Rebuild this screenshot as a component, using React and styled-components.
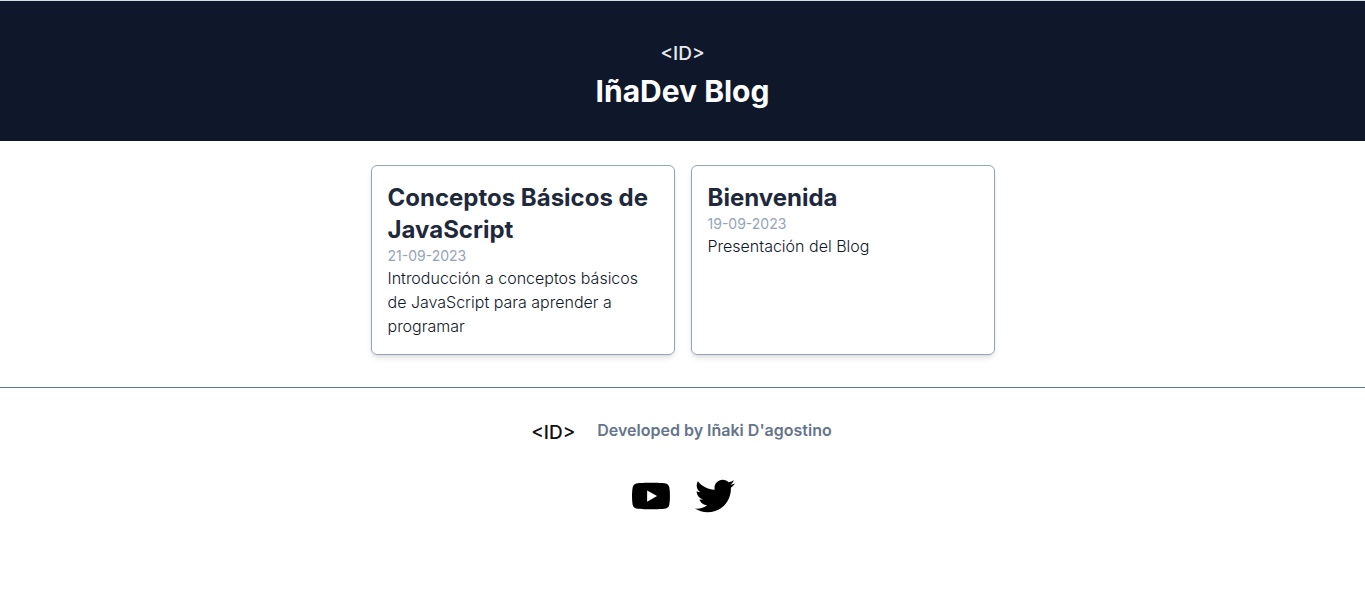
import React from "react";
import styled, { createGlobalStyle } from "styled-components";
import { FaTwitter, FaYoutube } from "react-icons/fa";

const GlobalStyle = createGlobalStyle`
  *, *::before, *::after { box-sizing: border-box; }
  body {
    margin: 0;
    background: #fff;
    color: #1e293b;
    font-family: Inter, "Liberation Sans", sans-serif;
    font-size: 16px;
    line-height: 24px;
  }
  h1, h2, p { margin: 0; }
  a { color: inherit; text-decoration: none; }
`;

const Header = styled.header`
  display: flex;
  flex-direction: column;
  align-items: center;
  padding: 32px 16px;
  border-top: 1px solid #d5dedd;
  background: #0f172a;
  color: #fff;
`;

const Logo = styled.a`
  display: flex;
  align-items: center;
  justify-content: center;
  width: 40px;
  height: 40px;
  padding-top: 2px;
  color: ${({ $light }) => ($light ? "#e8eaee" : "#111")};
  font-size: 19px;
  font-weight: 500;
  line-height: 24px;
`;

const SiteTitle = styled.h1`
  font-size: 30px;
  font-weight: 700;
  line-height: 36px;
`;

const Posts = styled.main`
  display: grid;
  grid-template-columns: repeat(auto-fit, minmax(240px, 1fr));
  gap: 16px;
  max-width: 672px;
  margin: 0 auto;
  padding: 24px 24px 32px;
`;

const Card = styled.a`
  display: block;
  padding: 16px;
  border: 1px solid #94a3b8;
  border-radius: 6px;
  box-shadow: 0 4px 6px -1px rgb(0 0 0 / 0.1), 0 2px 4px -2px rgb(0 0 0 / 0.1);
`;

const CardTitle = styled.h2`
  font-size: 24px;
  font-weight: 700;
  line-height: 32px;
`;

const CardDate = styled.time`
  display: block;
  color: #94a3b8;
  font-size: 14px;
  line-height: 20px;
`;

const Summary = styled.p`
  color: #0f172a;
  font-weight: 300;
`;

const Footer = styled.footer`
  display: flex;
  flex-direction: column;
  align-items: center;
  gap: 24px;
  padding: 24px;
  border-top: 1px solid #64748b;
`;

const Credits = styled.div`
  display: flex;
  align-items: center;
  gap: 24px;
`;

const Author = styled.p`
  padding-bottom: 4px;
  color: #64748b;
  font-weight: 600;
`;

const SocialLink = styled.a`
  display: flex;
  color: #000;
`;

const posts = [
  {
    title: "Conceptos Básicos de JavaScript",
    date: "21-09-2023",
    iso: "2023-09-21",
    summary: "Introducción a conceptos básicos de JavaScript para aprender a programar",
  },
  {
    title: "Bienvenida",
    date: "19-09-2023",
    iso: "2023-09-19",
    summary: "Presentación del Blog",
  },
];

export default function App() {
  return (
    <>
      <GlobalStyle />
      <Header>
        <Logo href="#" $light>{"<ID>"}</Logo>
        <SiteTitle>IñaDev Blog</SiteTitle>
      </Header>
      <Posts>
        {posts.map((post) => (
          <Card key={post.iso} href={`#${post.iso}`}>
            <CardTitle>{post.title}</CardTitle>
            <CardDate dateTime={post.iso}>{post.date}</CardDate>
            <Summary>{post.summary}</Summary>
          </Card>
        ))}
      </Posts>
      <Footer>
        <Credits>
          <Logo href="#">{"<ID>"}</Logo>
          <Author>Developed by Iñaki D'agostino</Author>
        </Credits>
        <Credits>
          <SocialLink href="#youtube" aria-label="YouTube">
            <FaYoutube size={40} />
          </SocialLink>
          <SocialLink href="#twitter" aria-label="Twitter">
            <FaTwitter size={40} />
          </SocialLink>
        </Credits>
      </Footer>
    </>
  );
}
